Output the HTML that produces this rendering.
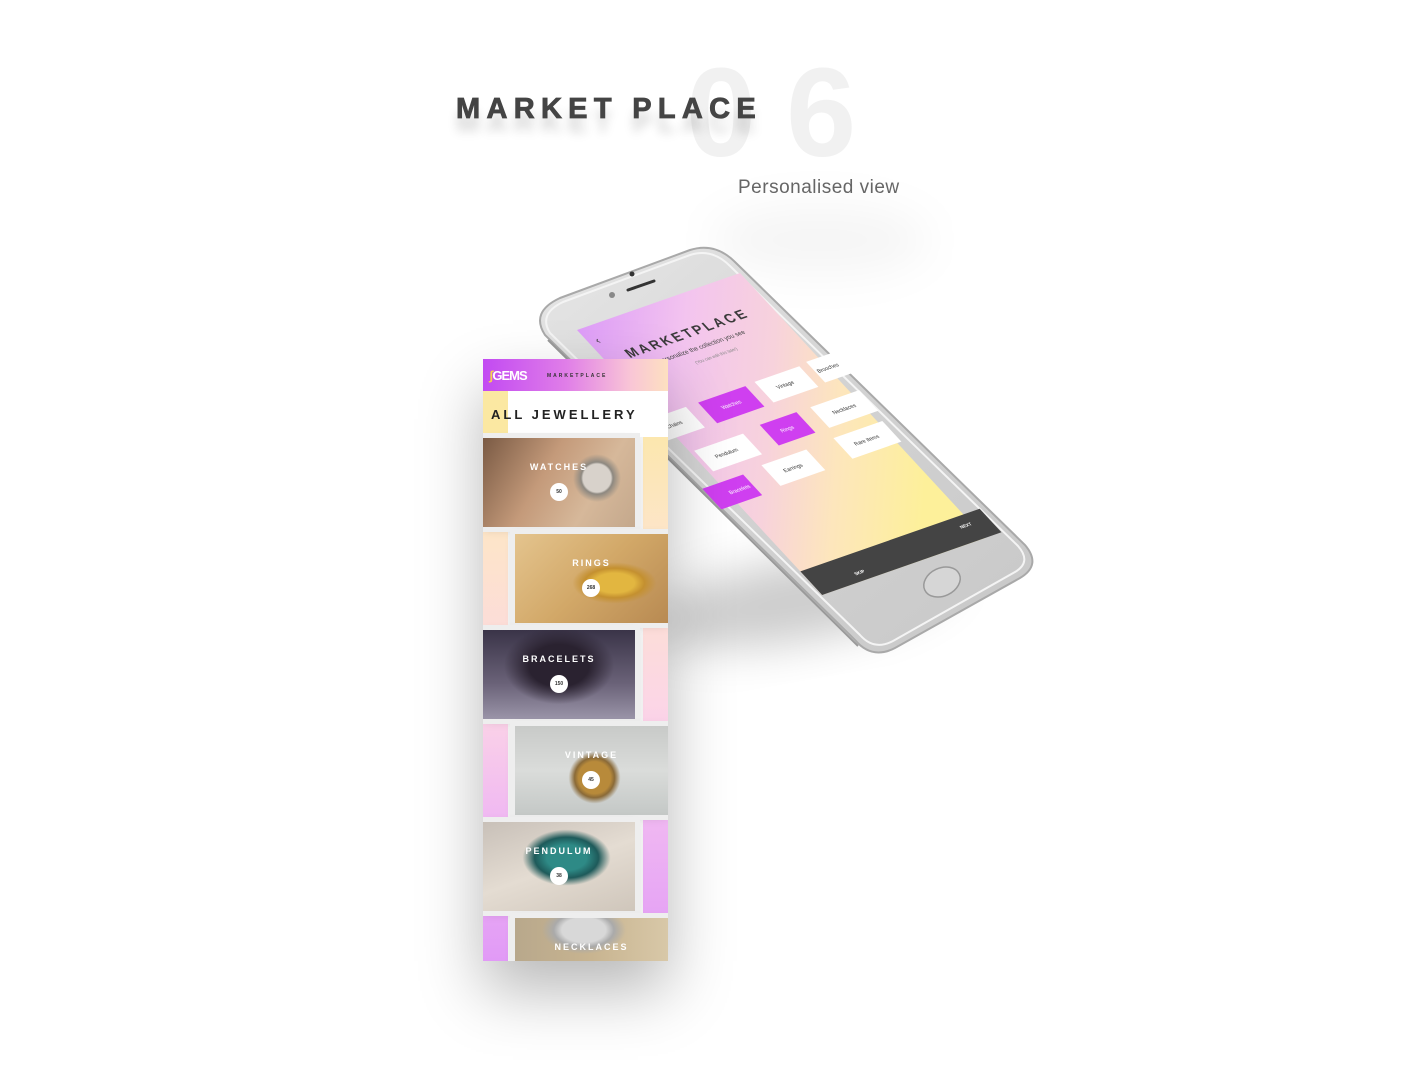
<!DOCTYPE html>
<html><head><meta charset="utf-8"><style>
body{margin:0;width:1412px;height:1080px;background:#fff;position:relative;overflow:hidden;font-family:"Liberation Sans",sans-serif}
.abs{position:absolute}
.n06{left:686px;top:50px;font-size:126px;font-weight:bold;color:#f1f1f1;letter-spacing:30px;line-height:1}
.title{left:456px;top:93px;font-size:29px;font-weight:bold;color:#444;letter-spacing:6.3px;text-shadow:0 14px 10px rgba(0,0,0,0.18);-webkit-text-stroke:0.8px #444}
.sub{left:738px;top:177px;font-size:19px;color:#666;letter-spacing:0.5px}
.lp{left:483px;top:359px;width:185px;height:602px;background:#fff;box-shadow:0 30px 60px rgba(0,0,0,0.28);overflow:hidden}
.hdr{left:0;top:0;width:185px;height:32px;background:linear-gradient(90deg,#c24af2 0%,#e07ee8 45%,#f9c6d6 80%,#fde0c0 100%)}
.strip{top:32px;width:25px;height:570px;background:linear-gradient(180deg,#fbe8a2 0%,#fde5c8 25%,#fcd6e6 55%,#f0b8f2 75%,#e19af6 100%)}
.card{width:152px;height:89px;box-shadow:0 0 0 5px #eee,0 2px 10px rgba(0,0,0,.15)}
.card span{position:absolute;left:0;right:0;top:24px;text-align:center;color:#fff;font-weight:bold;font-size:9px;letter-spacing:2px}
.card i{position:absolute;left:67px;top:45px;width:18px;height:18px;border-radius:50%;background:#fff;font-style:normal;font-size:5px;font-weight:bold;text-align:center;line-height:18px;color:#333}
</style></head><body>
<div class="abs n06">06</div>
<div class="abs title">MARKET PLACE</div>
<div class="abs sub">Personalised view</div>

<svg class="abs" style="left:0;top:0" width="1412" height="1080">
<defs>
<filter id="bl" x="-50%" y="-50%" width="200%" height="200%"><feGaussianBlur stdDeviation="22"/></filter>
<linearGradient id="body" x1="0" y1="0" x2="1" y2="1"><stop offset="0" stop-color="#e6e6e6"/><stop offset="0.5" stop-color="#d2d2d2"/><stop offset="1" stop-color="#c8c8c8"/></linearGradient>
<linearGradient id="scr" x1="0" y1="0" x2="0.6" y2="1"><stop offset="0" stop-color="#dd9cf8"/><stop offset="0.3" stop-color="#f3c4ef"/><stop offset="0.55" stop-color="#f7d2dc"/><stop offset="0.75" stop-color="#fde6bc"/><stop offset="1" stop-color="#fdf09a"/></linearGradient>
</defs>
<ellipse cx="800" cy="600" rx="150" ry="40" fill="rgba(0,0,0,0.2)" filter="url(#bl)" transform="rotate(-10 800 600)"/>
<ellipse cx="820" cy="240" rx="110" ry="35" fill="rgba(0,0,0,0.04)" filter="url(#bl)"/>
<path d="M560,298 L690,250 Q715,242 735,262 L1025,545 Q1042,565 1020,578 L895,648 Q872,660 855,640 L545,335 Q530,312 560,298 Z" fill="url(#body)" stroke="#a9a9a9" stroke-width="2"/>
<path d="M563,302 L690,255 Q712,248 730,266 L1018,546 Q1032,562 1015,572 L893,641 Q874,651 860,635 L550,333 Q538,314 563,302 Z" fill="none" stroke="#f4f4f4" stroke-width="2"/>
<path d="M548,340 L858,646" stroke="#9a9a9a" stroke-width="2"/>
<g transform="matrix(0.815 -0.285 0.681 0.736 577 330)">
<rect x="0" y="0" width="200" height="360" fill="url(#scr)"/>
<text x="8" y="22" font-size="12" fill="#333">‹</text>
<text x="99" y="48" font-size="15" font-weight="bold" fill="#3a3a3a" text-anchor="middle" letter-spacing="3">MARKETPLACE</text>
<text x="101" y="64" font-size="7" fill="#444" text-anchor="middle">Personalize the collection you see</text>
<text x="107" y="78" font-size="5" fill="#888" text-anchor="middle">(You can edit this later)</text>
<g font-size="6" text-anchor="middle" fill="#333">
<rect x="-20" y="118" width="55" height="28" fill="#fff"/><text x="9" y="134">Chains</text>
<rect x="50" y="118" width="58" height="28" fill="#cf3ff0"/><text x="79" y="134" fill="#fff">Watches</text>
<rect x="120" y="117" width="55" height="28" fill="#fff"/><text x="146" y="133">Vintage</text>
<rect x="185" y="115" width="45" height="28" fill="#fff"/><text x="200" y="131">Brooches</text>
<rect x="5" y="166" width="60" height="28" fill="#fff"/><text x="33" y="182">Pendulum</text>
<rect x="88" y="163" width="45" height="28" fill="#cf3ff0"/><text x="110" y="179" fill="#fff">Rings</text>
<rect x="150" y="163" width="60" height="28" fill="#fff"/><text x="180" y="179">Necklaces</text>
<rect x="-20" y="208" width="50" height="28" fill="#cf3ff0"/><text x="14" y="224" fill="#fff">Bracelets</text>
<rect x="55" y="205" width="55" height="28" fill="#fff"/><text x="82" y="221">Earrings</text>
<rect x="145" y="203" width="60" height="28" fill="#fff"/><text x="174" y="219">Rare Items</text>
</g>
<rect x="0" y="328" width="220" height="32" fill="#444"/>
<text x="48" y="352" font-size="5" font-weight="bold" fill="#fff">SKIP</text>
<text x="186" y="342" font-size="5" font-weight="bold" fill="#fff">NEXT</text>
</g>
<ellipse cx="942" cy="582" rx="19" ry="14" transform="rotate(-25 942 582)" fill="#d6d6d6" stroke="#999" stroke-width="1.5"/>
<line x1="628" y1="290" x2="654" y2="281" stroke="#333" stroke-width="3" stroke-linecap="round"/>
<circle cx="632" cy="274" r="2.5" fill="#333"/>
<circle cx="612" cy="295" r="3" fill="#888"/>
</svg>

<div class="abs lp">
<div class="abs hdr">
<div class="abs" style="left:6px;top:9px;color:#fff;font-weight:bold;font-size:13px;letter-spacing:-1px"><span style="color:#f6d24c">ʃ</span>GEMS</div>
<div class="abs" style="left:64px;top:14px;font-size:5px;font-weight:bold;color:#333;letter-spacing:2px">MARKETPLACE</div>
</div>
<div class="abs strip" style="left:0"></div>
<div class="abs strip" style="left:160px"></div>
<div class="abs" style="left:25px;top:32px;width:135px;height:570px;background:#f3f3f3"></div>
<div class="abs" style="left:0;top:32px;width:185px;height:46px;background:linear-gradient(90deg,#fbe8a2 0 25px,#fff 25px)"></div>
<div class="abs" style="left:8px;top:48px;font-size:13px;font-weight:bold;letter-spacing:3px;color:#222">ALL JEWELLERY</div>
<div class="abs card" style="left:0;top:79px;background:radial-gradient(circle at 75% 45%,#d8d2cb 0 14px,#8d8880 16px,transparent 24px),linear-gradient(120deg,#7a5a44,#c49a7a 40%,#d6b89a 70%,#c4a88c)"><span>WATCHES</span><i>50</i></div>
<div class="abs card" style="left:32px;top:175px;width:153px;background:radial-gradient(ellipse at 65% 55%,#e2b640 0 20px,#c49030 30px,transparent 42px),linear-gradient(135deg,#e4c48e,#d2a868 50%,#b88a52)"><span>RINGS</span><i>268</i></div>
<div class="abs card" style="left:0;top:271px;background:radial-gradient(ellipse at 50% 40%,#2a2230 0 30px,transparent 55px),linear-gradient(180deg,#3a3448,#6a6278 60%,#9a94a8)"><span>BRACELETS</span><i>150</i></div>
<div class="abs card" style="left:32px;top:367px;width:153px;background:radial-gradient(circle at 52% 58%,#b88a3a 0 16px,#8a6a38 20px,transparent 26px),linear-gradient(180deg,#c8cac8,#dadcda 50%,#c4c8c6)"><span>VINTAGE</span><i>45</i></div>
<div class="abs card" style="left:0;top:463px;background:radial-gradient(ellipse at 55% 40%,#2e8a86 0 20px,#1e5a5a 32px,transparent 44px),linear-gradient(160deg,#c8c0b8,#e4dcd2 50%,#cfc6bb)"><span>PENDULUM</span><i>38</i></div>
<div class="abs card" style="left:32px;top:559px;width:153px;height:60px;background:radial-gradient(ellipse at 45% 20%,#d8d8d8 0 22px,#aaa 30px,transparent 42px),linear-gradient(90deg,#b8a88c,#c8b490 50%,#d8c8a8)"><span>NECKLACES</span></div>
</div>
</body></html>
